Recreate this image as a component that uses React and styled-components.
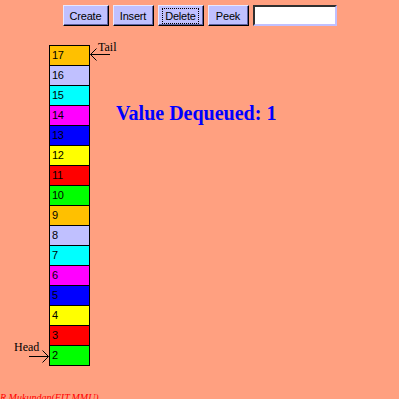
import React from "react";
import styled, { createGlobalStyle } from "styled-components";

const Global = createGlobalStyle`
  html, body { margin: 0; padding: 0; }
  body {
    background: #ffa080;
    width: 399px;
    height: 399px;
    overflow: hidden;
    font-family: "Liberation Serif", "Times New Roman", serif;
  }
`;

const Page = styled.div`
  display: flex;
  flex-direction: column;
  width: 399px;
  height: 399px;
`;

const Toolbar = styled.div`
  display: flex;
  justify-content: center;
  gap: 4px;
  padding: 5px 0 0 0;
  height: 21px;
`;

const Button = styled.button`
  box-sizing: border-box;
  width: ${(p) => p.$w}px;
  height: 21px;
  padding: 0;
  margin: 0;
  background: #c0c0ff;
  color: #000;
  font-family: "Liberation Sans", Arial, sans-serif;
  font-size: 11px;
  letter-spacing: -0.2px;
  border: 1px solid;
  border-color: #e8e8ff #000 #000 #e8e8ff;
  box-shadow: inset -1px -1px 0 #6060a0;
  display: flex;
  align-items: center;
  justify-content: center;
  cursor: default;
`;

const Focus = styled.span`
  outline: 1px dotted #000;
  padding: 1px 2px;
  line-height: 12px;
`;

const Field = styled.input`
  box-sizing: border-box;
  width: 84px;
  height: 21px;
  margin: 0;
  padding: 0 3px;
  background: #fff;
  border: 2px solid;
  border-color: #303030 #c0c0ff #c0c0ff #303030;
  outline: none;
`;

const Stage = styled.div`
  display: flex;
  align-items: flex-start;
  padding: 19px 0 0 49px;
`;

const QueueWrap = styled.div`
  position: relative;
`;

const Column = styled.div`
  display: flex;
  flex-direction: column;
  width: 39px;
  border: 1px solid #000;
`;

const Cell = styled.div`
  height: 19px;
  background: ${(p) => p.$color};
  border-bottom: ${(p) => (p.$last ? "none" : "1px solid #000")};
  font-family: "Liberation Sans", Arial, sans-serif;
  font-size: 11px;
  letter-spacing: -0.3px;
  line-height: 19px;
  padding-left: 2px;
  color: #000;
`;

const Pointer = styled.div`
  position: absolute;
  left: ${(p) => p.$x}px;
  top: ${(p) => p.$y}px;
  width: 20px;
  height: 14px;
`;

const PointerLabel = styled.span`
  position: absolute;
  left: ${(p) => p.$x}px;
  top: ${(p) => p.$y}px;
  font-family: "Liberation Serif", "Times New Roman", serif;
  font-size: 12px;
  line-height: 12px;
  color: #000;
  white-space: nowrap;
`;

const Message = styled.div`
  margin: 56px 0 0 26px;
  font-family: "Liberation Serif", "Times New Roman", serif;
  font-weight: bold;
  font-size: 20px;
  line-height: 24px;
  color: #0000ff;
  white-space: nowrap;
`;

const Footer = styled.div`
  margin-top: auto;
  height: 7px;
  overflow: visible;
  font-family: "Liberation Serif", "Times New Roman", serif;
  font-style: italic;
  font-size: 10px;
  line-height: 12px;
  color: #ff0000;
  white-space: nowrap;
`;

const colors = [
  "#ffc000",
  "#c0c0ff",
  "#00ffff",
  "#ff00ff",
  "#0000ff",
  "#ffff00",
  "#ff0000",
  "#00ff00",
];

const values = Array.from({ length: 16 }, (_, i) => 17 - i);

function ArrowLeft() {
  return (
    <svg width="20" height="14" viewBox="0 0 20 14" style={{ display: "block" }}>
      <path d="M0.5 7.5 H20 M0.5 7.5 L6.5 1.5 M0.5 7.5 L6.5 13.5" stroke="#000" strokeWidth="1" fill="none" />
    </svg>
  );
}

function ArrowRight() {
  return (
    <svg width="20" height="14" viewBox="0 0 20 14" style={{ display: "block" }}>
      <path d="M0 7.5 H19.5 M19.5 7.5 L13.5 1.5 M19.5 7.5 L13.5 13.5" stroke="#000" strokeWidth="1" fill="none" />
    </svg>
  );
}

export default function App() {
  return (
    <>
      <Global />
      <Page>
        <Toolbar>
          <Button $w={46}>Create</Button>
          <Button $w={41}>Insert</Button>
          <Button $w={46}>
            <Focus>Delete</Focus>
          </Button>
          <Button $w={41}>Peek</Button>
          <Field type="text" />
        </Toolbar>
        <Stage>
          <QueueWrap>
            <Column>
              {values.map((v, i) => (
                <Cell key={v} $color={colors[i % 8]} $last={i === values.length - 1}>
                  {v}
                </Cell>
              ))}
            </Column>
            <Pointer $x={41} $y={2}>
              <ArrowLeft />
              <PointerLabel $x={8} $y={-6}>Tail</PointerLabel>
            </Pointer>
            <Pointer $x={-20} $y={304}>
              <ArrowRight />
              <PointerLabel $x={-15} $y={-8}>Head</PointerLabel>
            </Pointer>
          </QueueWrap>
          <Message>Value Dequeued: 1</Message>
        </Stage>
        <Footer>R.Mukundan(FIT,MMU)</Footer>
      </Page>
    </>
  );
}
